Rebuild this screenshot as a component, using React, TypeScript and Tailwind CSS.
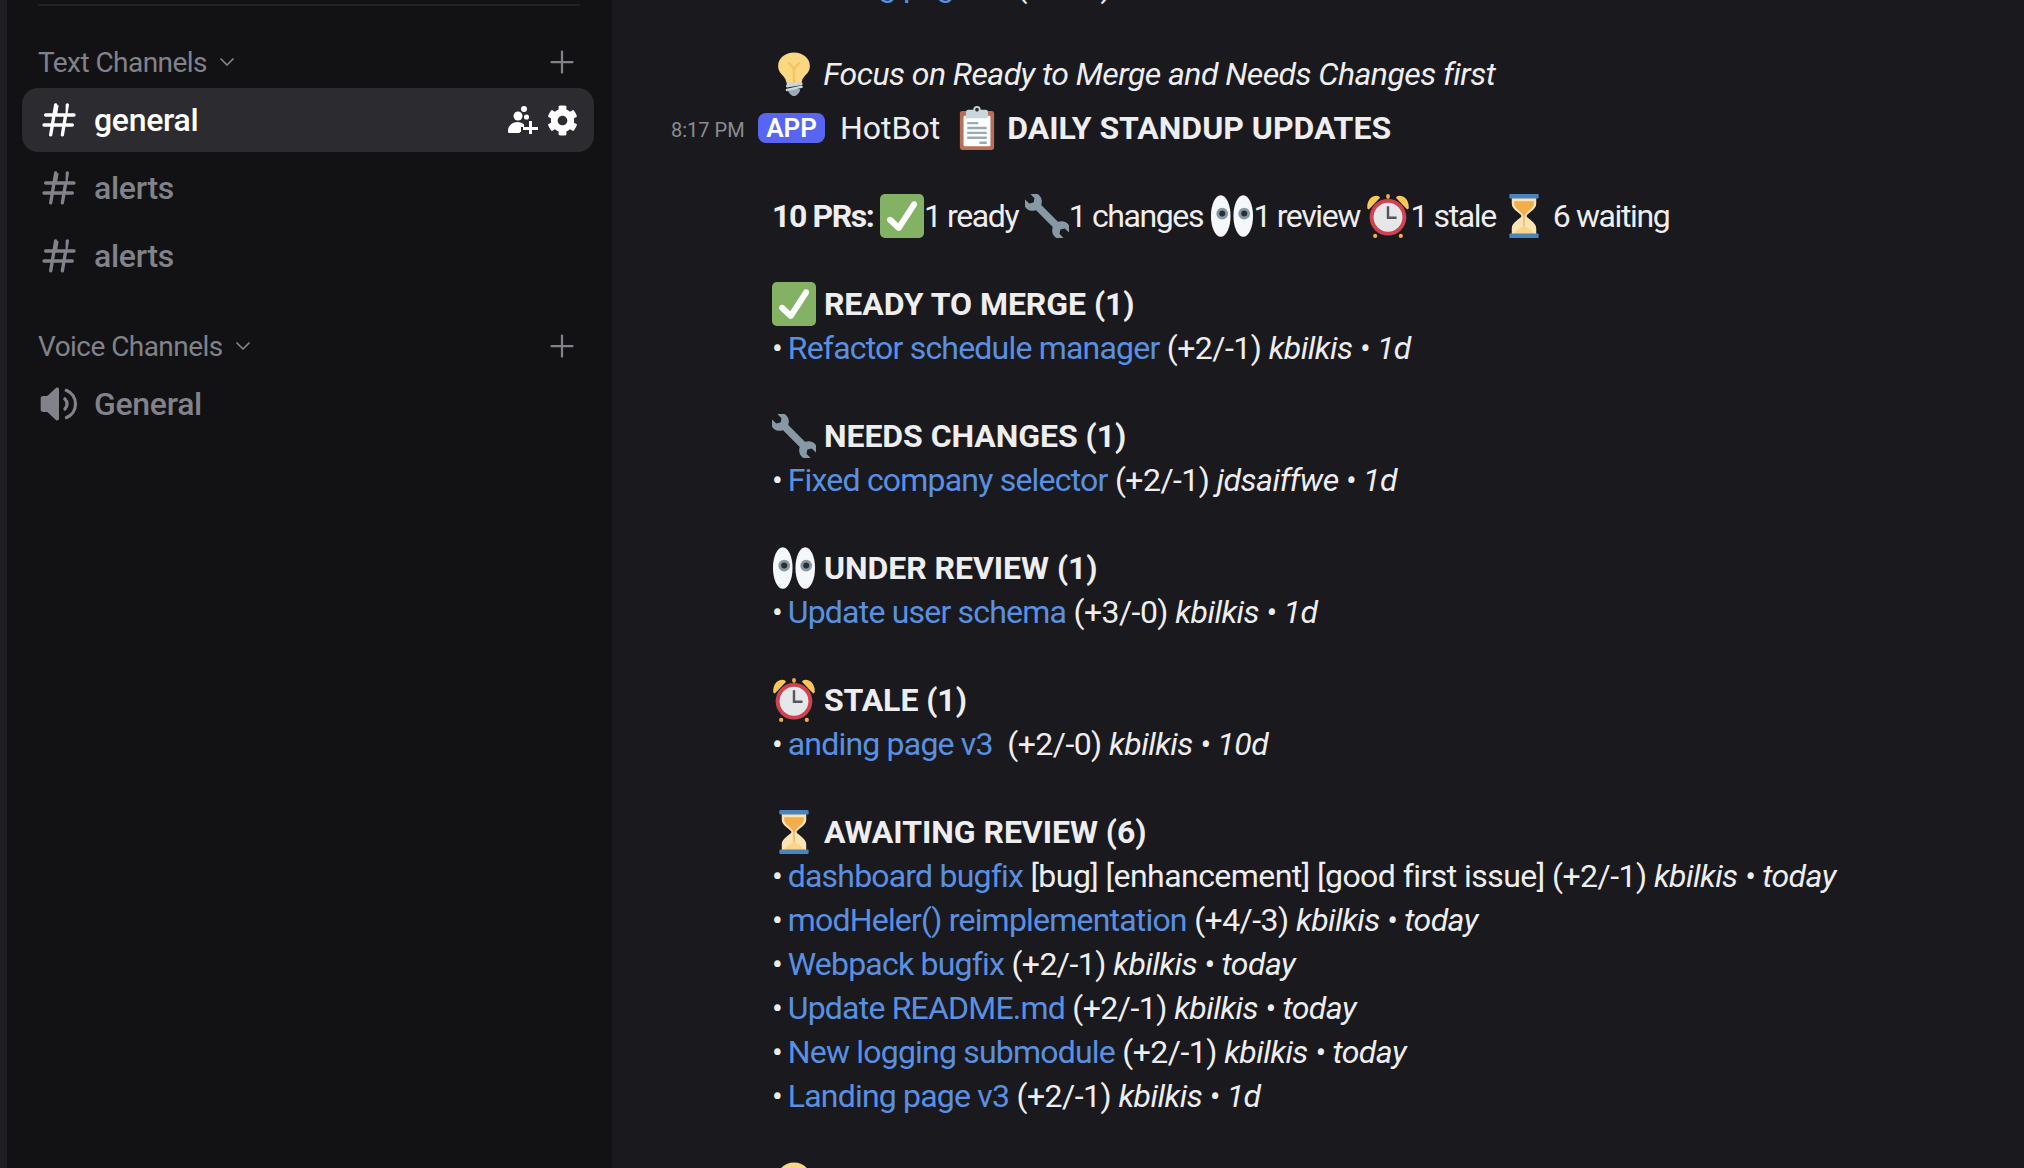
import React from 'react';
import { FaCog } from 'react-icons/fa';
import { ChevronDown, Plus } from 'lucide-react';

const HASH =
  'M10.99 3.16A1 1 0 1 0 9 2.84L8.15 8H4a1 1 0 0 0 0 2h3.82l-.67 4H3a1 1 0 1 0 0 2h3.82l-.8 4.84a1 1 0 0 0 1.97.32L8.85 16h4.97l-.8 4.84a1 1 0 0 0 1.97.32l.86-5.16H20a1 1 0 1 0 0-2h-3.82l.67-4H21a1 1 0 1 0 0-2h-3.82l.8-4.84a1 1 0 1 0-1.97-.32L15.95 8h-4.96l.8-4.84ZM14.15 14l.67-4H9.85l-.67 4h4.97Z';

const HashIcon = ({ className }: { className: string }) => (
    <svg viewBox="0 0 24 24" className={className} fill="currentColor">
        <path fillRule="evenodd" d={HASH} />
    </svg>
);

const SpeakerIcon = () => (
    <svg viewBox="0 0 24 24" className="w-10 h-10 text-[#81828a]" fill="currentColor">
        <path d="M12 3.1c0-.9-1-1.3-1.700-.8L5.300 6.900c-.2.2-.5.3-.8.3H2.500C1.700 7.200 1 7.900 1 8.700v6.600c0 .8.700 1.500 1.500 1.500h2c.3 0 .6.100.8.300l5 4.600c.7.500 1.700.1 1.700-.8V3.100Z" />
        <path d="M14.800 8.200a1 1 0 0 1 1.400 0 5.300 5.300 0 0 1 0 7.600 1 1 0 0 1-1.400-1.400 3.300 3.300 0 0 0 0-4.800 1 1 0 0 1 0-1.400Z" />
        <path d="M15.400 3.400a1 1 0 0 1 1.300-.5 9.800 9.800 0 0 1 0 18.200 1 1 0 0 1-.8-1.800 7.800 7.800 0 0 0 0-14.600 1 1 0 0 1-.5-1.300Z" />
    </svg>
);

const InviteIcon = () => (
    <svg viewBox="0 0 30 28" className="w-[30px] h-[28px] text-white" fill="currentColor">
        <circle cx="16" cy="3" r="3" />
        <circle cx="10" cy="10" r="4.500" />
        <circle cx="18.500" cy="11" r="2.600" />
        <path d="M1 27c-1 0-1-1-1-2 0-5 4-9 9.500-9 2.700 0 5 1 6.500 2.500V21h-3v5h-1l-.5 1H1Z" />
        <path d="M21 15h3v6h6v3h-6v4h-3v-4h-6v-3h6v-6Z" />
    </svg>
);

// negative margins keep the 44px emoji from stretching the 44px line box
const emojiClass = 'inline-block w-11 h-11 -my-2 align-[-3px]';

const CheckEmoji = () => (
    <svg viewBox="0 0 36 36" className={emojiClass}>
        <path fill="#84B264" d="M36 32a4 4 0 0 1-4 4H4a4 4 0 0 1-4-4V4a4 4 0 0 1 4-4h28a4 4 0 0 1 4 4v28z" />
        <path fill="#FFF" d="M29.280 6.362c-1.156-.751-2.704-.422-3.458.736L14.936 23.877l-5.029-4.650c-1.014-.938-2.596-.875-3.533.138-.937 1.014-.875 2.596.139 3.533l7.209 6.666c.48.445 1.090.665 1.696.665.673 0 1.534-.282 2.099-1.139.332-.506 12.500-19.270 12.500-19.270.751-1.159.421-2.707-.737-3.458z" />
    </svg>
);

const WrenchEmoji = () => (
    <svg viewBox="0 0 36 36" className={emojiClass}>
        <g transform="translate(18 18) rotate(-45)" fill="#8899A6">
            <rect x="-3" y="-14" width="6" height="28" />
            <path d="M-3.200-23.400A7.500 7.500 0 1 0 3.200-23.400L3-17.500L0-15.500L-3-17.500Z" />
            <path d="M-3.200 23.400A7.500 7.500 0 1 1 3.200 23.400L3 17.500L0 15.500L-3 17.500Z" />
        </g>
    </svg>
);

const EyesEmoji = () => (
    <svg viewBox="0 0 36 36" className={emojiClass}>
        <ellipse fill="#F5F8FA" cx="8.800" cy="18" rx="8" ry="17" />
        <ellipse fill="#F5F8FA" cx="27.200" cy="18" rx="8" ry="17" />
        <circle fill="#8899A6" cx="10" cy="16" r="4.800" />
        <circle fill="#292F33" cx="10" cy="16" r="2.500" />
        <circle fill="#8899A6" cx="28" cy="16" r="4.800" />
        <circle fill="#292F33" cx="28" cy="16" r="2.500" />
    </svg>
);

const ClockEmoji = () => (
    <svg viewBox="0 0 36 36" className={emojiClass}>
        <path fill="#F9C956" d="M1 11C1 4.500 5 1.500 8.500 1.500c1.500 0 2.500.7 3 1.500L2.500 12.500C1.700 12.500 1 12 1 11Zm34 0c0-6.500-4-9.500-7.500-9.500-1.500 0-2.500.7-3 1.500l9 9.500c.8 0 1.500-.5 1.500-1.500Z" />
        <rect fill="#F2AE4A" x="16.500" y="0" width="3" height="4" rx="1.500" />
        <circle fill="#F2AE4A" cx="7.500" cy="34.300" r="1.700" />
        <circle fill="#F2AE4A" cx="28.500" cy="34.300" r="1.700" />
        <circle fill="#CF4350" cx="18" cy="19" r="15" />
        <circle fill="#E6E7E8" cx="18" cy="19" r="11.800" />
        <path fill="#55565a" d="M17 10h2v8.500h6v2h-8V10Z" />
    </svg>
);

const HourglassEmoji = () => (
    <svg viewBox="0 0 36 36" className={emojiClass}>
        <path fill="#FBE3B4" d="M8 3h20v5c0 5-7 7.500-8 10 1 2.500 8 5 8 10v5H8v-5c0-5 7-7.500 8-10-1-2.500-8-5-8-10V3Z" />
        <path fill="#F2AE4A" d="M10 6h16v2c0 4-6.500 6.500-7.500 10h-1C16.500 14.500 10 12 10 8V6Z" />
        <path fill="#F2AE4A" d="M17.500 18h1v9h-1z" />
        <path fill="#F9D58A" d="M10 33c0-2 6-6 8-7 2 1 8 5 8 7H10Z" />
        <rect fill="#4B83BD" x="6" y="0" width="24" height="3.600" rx="1" />
        <rect fill="#4B83BD" x="6" y="32.400" width="24" height="3.600" rx="1" />
    </svg>
);

const ClipboardEmoji = () => (
    <svg viewBox="0 0 36 36" className={emojiClass}>
        <path fill="#B96F57" d="M32 34a2 2 0 0 1-2 2H6a2 2 0 0 1-2-2V6a2 2 0 0 1 2-2h24a2 2 0 0 1 2 2v28Z" />
        <path fill="#FFF" d="M29 32a1 1 0 0 1-1 1H8a1 1 0 0 1-1-1V9a1 1 0 0 1 1-1h20a1 1 0 0 1 1 1v23Z" />
        <path fill="#CCD6DD" d="M25 3h-4a3 3 0 1 0-6 0h-4a2 2 0 0 0-2 2v5h18V5a2 2 0 0 0-2-2Z" />
        <circle fill="#292F33" cx="18" cy="3" r="1.500" />
        <path fill="#99AAB5" d="M10 13h9v2h-9zM10 17h16v2H10zM10 21h16v2H10zM10 25h16v2H10zM20 29h6v2h-6z" />
    </svg>
);

const BulbEmoji = () => (
    <svg viewBox="0 0 36 36" className={emojiClass}>
        <path fill="#FAD781" d="M31 11.500C31 18 25 19.500 24.500 24c-.3 2.800-3.500 3-6.500 3-2.500 0-6.200-.5-6.500-3C11 19.500 5 18 5 11.500 5 5 11 .5 18 .5s13 4.500 13 11Z" />
        <path fill="#F5C45E" d="M23.300 9.300 19 14v11h-2V14l-4.300-4.700 1.500-1.300L18 12.200 21.800 8l1.500 1.300Z" />
        <path fill="#99AAB5" d="M23 31c0 1-2.200 5-5 5s-5-4-5-5 2.200-1 5-1 5 0 5 1Z" />
        <path fill="#CCD6DD" d="M12 25h12a1 1 0 0 1 .5 1.900L12.500 29a1 1 0 0 1-.5-1.900V25Zm12 2.500a1 1 0 0 1 .3 2L12.500 32a1 1 0 0 1-.5-2l12-2.500Z" />
    </svg>
);

const ChannelRow = ({ name, active }: { name: string; active?: boolean }) => (
    <div
        className={`h-16 flex items-center pl-[18px] pr-[16px] rounded-2xl ${
            active ? 'bg-[#2c2c30] text-white' : 'text-[#81828a]'
        }`}
    >
        <HashIcon className="w-10 h-10 shrink-0 -ml-[1px]" />
        <span className="ml-[15px] font-medium flex-1 tracking-[-0.3px]">{name}</span>
        {active && (
            <div className="flex items-center gap-[9px]">
                <InviteIcon />
                <FaCog className="w-[31px] h-[31px] text-white" />
            </div>
        )}
    </div>
);

const CategoryHeader = ({ name }: { name: string }) => (
    <div className="flex items-center h-8 pl-[31px] pr-[14px] text-[#81828a] text-[28px]">
        <span className="mt-[2px]">{name}</span>
        <ChevronDown className="w-6 h-6 ml-[8px]" strokeWidth={1.75} />
        <Plus className="w-9 h-9 ml-auto" strokeWidth={1.5} />
    </div>
);

const Link = ({ children }: { children: React.ReactNode }) => (
    <span className="text-[#5a90e2] tracking-[-0.8px]">{children}</span>
);

const Item = ({ title, stats, who }: { title: string; stats: string; who: string }) => (
    <div>
        <span className="tracking-[-1.5px]">{'• '}</span>
        <Link>{title}</Link> {stats} <em>{who}</em>
    </div>
);

const Heading = ({ icon, children }: { icon: React.ReactNode; children: React.ReactNode }) => (
    <div className="font-bold tracking-[-0.05px]">
        {icon} {children}
    </div>
);

const Gap = () => <div className="h-11" />;

export default function App() {
    return (
        <div className="flex h-screen overflow-hidden bg-[#1a1a1e] text-[#eeeef0] text-[32px] leading-[44px] tracking-[-0.55px] font-['Roboto',sans-serif]">
            <aside className="w-[612px] shrink-0 bg-[#121214] border-l-[7px] border-[#1f1f23] pr-[18px] pl-[15px]">
                <div className="h-[2px] mt-[4px] ml-[16px] mr-[14px] bg-[#222226]" />
                <div className="mt-[40px]">
                    <div className="-ml-[15px]"><CategoryHeader name="Text Channels" /></div>
                </div>
                <div className="mt-[10px] flex flex-col gap-1">
                    <ChannelRow name="general" active />
                    <ChannelRow name="alerts" />
                    <ChannelRow name="alerts" />
                </div>
                <div className="mt-[42px] -ml-[15px]">
                    <CategoryHeader name="Voice Channels" />
                </div>
                <div className="mt-[10px] h-16 flex items-center pl-[17px] text-[#81828a]">
                    <SpeakerIcon />
                    <span className="ml-[15px] font-medium tracking-[-0.3px]">General</span>
                </div>
            </aside>
            <main className="flex-1 pl-[160px] -mt-[36px]">
                <Item title="Landing page v3" stats="(+2/-1)" who="kbilkis • 1d" />
                <Gap />
                <div className="italic"><BulbEmoji /> Focus on Ready to Merge and Needs Changes first</div>
                <div className="mt-[10px] h-11 -ml-[101px] flex items-center whitespace-pre">
                    <span className="w-[71px] text-[20px] text-[#8b8c92] mt-[4px] tracking-normal">8:17 PM</span>
                    <span className="ml-[16px] w-[67px] h-[30px] rounded-lg bg-[#5865f2] text-white text-[26px] font-semibold leading-[30px] text-center tracking-normal">APP</span>
                    <span className="ml-[15px] tracking-normal">HotBot</span>
                    <span className="ml-[15px] font-bold tracking-normal"><ClipboardEmoji /> DAILY STANDUP UPDATES</span>
                </div>
                <Gap />
                <div className="tracking-[-1.4px]">
                    <b>10 PRs:</b> <CheckEmoji />1 ready <WrenchEmoji />1 changes <EyesEmoji />1 review <ClockEmoji />1 stale <HourglassEmoji /> 6 waiting
                </div>
                <Gap />
                <Heading icon={<CheckEmoji />}>READY TO MERGE (1)</Heading>
                <Item title="Refactor schedule manager" stats="(+2/-1)" who="kbilkis • 1d" />
                <Gap />
                <Heading icon={<WrenchEmoji />}>NEEDS CHANGES (1)</Heading>
                <Item title="Fixed company selector" stats="(+2/-1)" who="jdsaiffwe • 1d" />
                <Gap />
                <Heading icon={<EyesEmoji />}>UNDER REVIEW (1)</Heading>
                <Item title="Update user schema" stats="(+3/-0)" who="kbilkis • 1d" />
                <Gap />
                <Heading icon={<ClockEmoji />}>STALE (1)</Heading>
                <Item title={'anding page v3\u00a0'} stats="(+2/-0)" who="kbilkis • 10d" />
                <Gap />
                <Heading icon={<HourglassEmoji />}>AWAITING REVIEW (6)</Heading>
                <Item title="dashboard bugfix" stats="[bug] [enhancement] [good first issue] (+2/-1)" who="kbilkis • today" />
                <Item title="modHeler() reimplementation" stats="(+4/-3)" who="kbilkis • today" />
                <Item title="Webpack bugfix" stats="(+2/-1)" who="kbilkis • today" />
                <Item title="Update README.md" stats="(+2/-1)" who="kbilkis • today" />
                <Item title="New logging submodule" stats="(+2/-1)" who="kbilkis • today" />
                <Item title="Landing page v3" stats="(+2/-1)" who="kbilkis • 1d" />
                <Gap />
                <div><BulbEmoji /></div>
            </main>
        </div>
    );
}
